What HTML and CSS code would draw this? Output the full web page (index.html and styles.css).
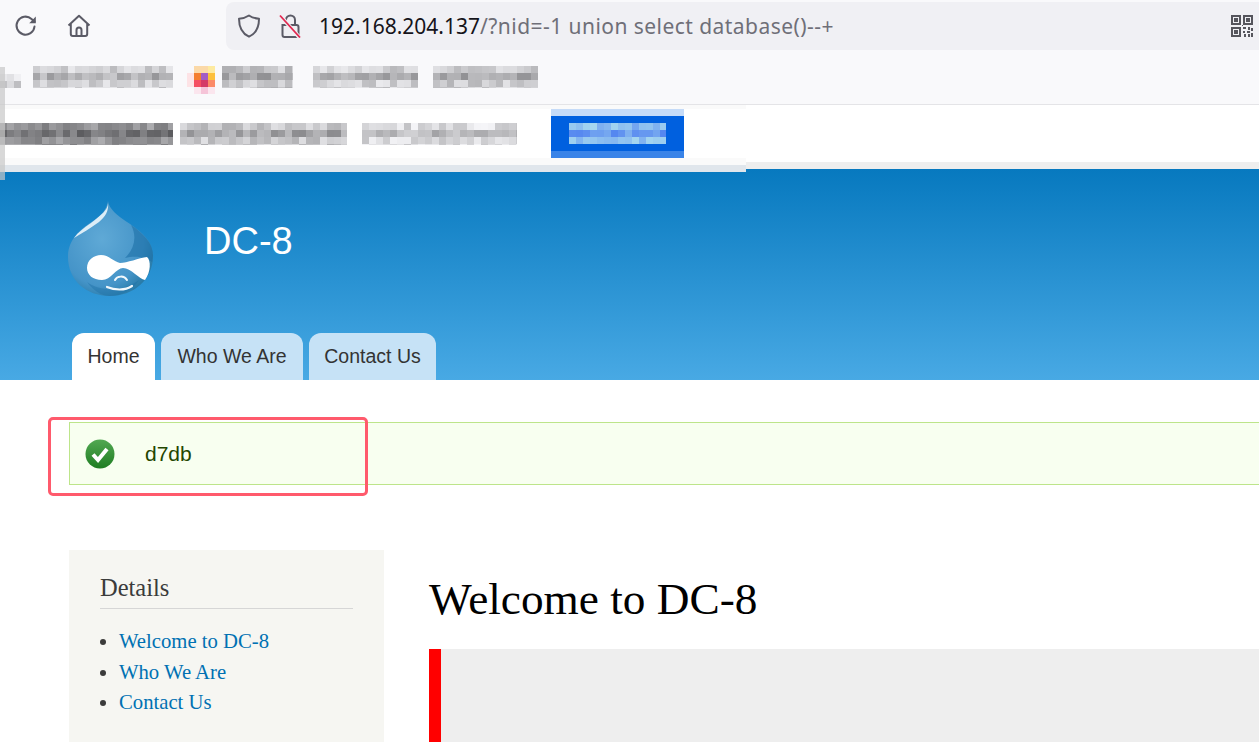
FILE: index.html
```html
<!DOCTYPE html>
<html lang="en">
<head>
    <meta charset="UTF-8">
    <meta name="viewport" content="width=device-width, initial-scale=1.0">
    <title>Welcome to DC-8</title>
    <link rel="stylesheet" href="styles.css">
</head>
<body>
    <div class="page">
        <div class="toolbar">
            <button class="nav-btn nav-reload" aria-label="Reload">
                <svg width="24" height="24" viewBox="0 0 24 24" fill="none" stroke="#5b5b66" stroke-width="2">
                    <path d="M20.5 12.5a9 9 0 1 1-3-7.6l3 2.6" stroke-linecap="round"/>
                    <path d="M21.8 2.6v6.6h-6.6z" fill="#5b5b66" stroke="none"/>
                </svg>
            </button>
            <button class="nav-btn nav-home" aria-label="Home">
                <svg width="24" height="24" viewBox="0 0 24 24" fill="none" stroke="#5b5b66" stroke-width="2" stroke-linejoin="round">
                    <path d="M1.5 11.5 12 1.8l10.5 9.7M3.8 10v10a2 2 0 0 0 2 2h12.4a2 2 0 0 0 2-2V10"/>
                    <path d="M9.5 22v-6a2.5 2.5 0 0 1 5 0v6"/>
                </svg>
            </button>
            <div class="urlbar">
                <svg class="url-shield" width="24" height="24" viewBox="0 0 24 24" fill="none" stroke="#5b5b66" stroke-width="2" stroke-linejoin="round">
                    <path d="M12 1.5c3 2 6 3 10 3.2 0 8-2.500 14.500-10 18-7.500-3.500-10-10-10-18 4-.2 7-1.200 10-3.200z"/>
                </svg>
                <svg class="url-lock" width="24" height="24" viewBox="0 0 24 24" fill="none">
                    <path d="M3.500 11h14a2 2 0 0 1 2 2v8a2 2 0 0 1-2 2h-12a2 2 0 0 1-2-2z" stroke="#5b5b66" stroke-width="2"/>
                    <path d="M7 10V6a4.500 4.500 0 0 1 9 0v4" stroke="#5b5b66" stroke-width="2"/>
                    <path d="M1.500 2 21 24" stroke="#f0f0f4" stroke-width="4"/>
                    <path d="M1 1.500 21 23.500" stroke="#e22850" stroke-width="1.800"/>
                </svg>
                <div class="url-text"><span class="url-host">192.168.204.137</span><span class="url-path">/?nid=-1 union select database()--+</span></div>
                <svg class="url-qr" width="22" height="22" viewBox="0 0 22 22" fill="#55555c">
                    <path d="M0 0h10v10H0zm2 2v6h6V2zm1 1h4v4H3zM12 0h10v10H12zm2 2v6h6V2zm1 1h4v4h-4zM0 12h10v10H0zm2 2v6h6v-6zm1 1h4v4H3z" fill-rule="evenodd"/>
                    <path d="M12 12h3v2h-3zm5 0h2v3h-2zm3 1h2v3h-2zm-8 3h2v2h-2zm4 0h3v2h-3zm-3 3h2v3h-2zm4 0h2v3h-2zm3-1h2v4h-2zm-9-8h1v1h-1z"/>
                </svg>
            </div>
        </div>

        <div class="bookmarks">
            <canvas class="mosaic bm-stub" width="21" height="14" data-shade="205"></canvas>
            <canvas class="mosaic bm-first" width="140" height="22" data-shade="175"></canvas>
            <svg class="bm-favicon" width="28" height="28" viewBox="0 0 28 28">
                <path fill="#fbd9a8" d="M7 0h14v7H7z"/>
                <path fill="#fdeaa0" d="M21 0h7v7h-7z"/>
                <path fill="#fde3e6" d="M0 7h7v14H0z"/>
                <path fill="#f47e2f" d="M7 7h7v7H7z"/>
                <path fill="#a35cc4" d="M14 7h7v7h-7z"/>
                <path fill="#fdc03c" d="M21 7h7v7h-7z"/>
                <path fill="#f54e62" d="M7 14h7v7H7z"/>
                <path fill="#d43a66" d="M14 14h7v7h-7z"/>
                <path fill="#fb8a68" d="M21 14h7v7h-7z"/>
                <path fill="#f5c4d8" d="M14 21h7v7h-7z"/>
                <path fill="#fbe6ee" d="M7 21h7v7H7zM21 21h7v7h-7z"/>
            </svg>
            <canvas class="mosaic bm-second" width="71" height="22" data-shade="165"></canvas>
            <canvas class="mosaic bm-third" width="105" height="22" data-shade="175"></canvas>
            <canvas class="mosaic bm-fourth" width="105" height="22" data-shade="170"></canvas>
        </div>

        <div class="notice">
            <div class="notice-main">
                <div class="notice-row">
                    <canvas class="mosaic" width="173" height="22" data-shade="115"></canvas>
                    <canvas class="mosaic" width="167" height="22" data-shade="165"></canvas>
                    <canvas class="mosaic notice-tail" width="155" height="22" data-shade="185"></canvas>
                    <div class="notice-btn">
                        <canvas class="mosaic" width="97" height="21" data-shade="165" data-tint="blue"></canvas>
                    </div>
                </div>
            </div>
        </div>
        <div class="edge-sliver"></div>

        <header class="site-header">
            <div class="branding">
                <svg class="logo" width="88" height="98" viewBox="0 0 88 98">
                    <defs>
                        <radialGradient id="dropFill" cx="0.4" cy="0.4" r="0.7">
                            <stop offset="0" stop-color="#5fa9d6"/>
                            <stop offset="0.7" stop-color="#4594c8"/>
                            <stop offset="1" stop-color="#20749f"/>
                        </radialGradient>
                    </defs>
                    <path d="M41 1C42 9 50 15 60 22 75 32 86 41 86 56 86 80 66 96 43 96 19 96 1 80 1 57 1 39 14 29 26 21 34 16 40 9 41 1z" fill="url(#dropFill)"/>
                    <path d="M64 25C76 33 86 43 86 56L85 62C80 58 70 55 58 58 68 48 70 36 64 25z" fill="#1c6fa6" opacity="0.6"/>
                    <path d="M20 82C34 92 56 92 72 80 66 90 54 96 43 96 34 96 26 90 20 82z" fill="#1c6fa6" opacity="0.4"/>
                    <path d="M41 3C41 10 34 15 24 23 17 28 11 32 7 38 15 33 24 28 32 22 38 17 42 11 41 3z" fill="#dcedf7"/>
                    <path d="M20 68C20 60 27 55 34 55 42 55 47 62 53 63 60 63 72 58 80 57 84 60 84 72 78 80 72 79 64 68 56 68 49 68 44 80 35 80 26 80 20 75 20 68z" fill="#fff"/>
                    <path d="M40 87C47 90 58 91 65 86" fill="none" stroke="#f2f8fc" stroke-width="2.200" stroke-linecap="round"/>
                    <path d="M48 80C50 76 57 75 60 80" fill="none" stroke="#f2f8fc" stroke-width="2" stroke-linecap="round"/>
                </svg>
                <div class="site-name">DC-8</div>
            </div>
            <nav class="tabs">
                <a class="tab tab-home tab-active" href="#">Home</a>
                <a class="tab tab-who" href="#">Who We Are</a>
                <a class="tab tab-contact" href="#">Contact Us</a>
            </nav>
        </header>

        <div class="message">
            <svg class="message-icon" width="30" height="30" viewBox="0 0 30 30">
                <defs>
                    <linearGradient id="okFill" x1="0" y1="0" x2="0" y2="1">
                        <stop offset="0" stop-color="#52a852"/>
                        <stop offset="1" stop-color="#1f7d22"/>
                    </linearGradient>
                </defs>
                <circle cx="15" cy="15" r="14.500" fill="url(#okFill)"/>
                <path d="M8 15.500l5 5.500 9-11" fill="none" stroke="#fff" stroke-width="4"/>
            </svg>
            <span class="message-text">d7db</span>
        </div>
        <div class="annotation"></div>

        <div class="content">
            <aside class="sidebar">
                <h2 class="sidebar-title">Details</h2>
                <ul class="sidebar-list">
                    <li><a href="#">Welcome to DC-8</a></li>
                    <li><a href="#">Who We Are</a></li>
                    <li><a href="#">Contact Us</a></li>
                </ul>
            </aside>
            <main class="main">
                <h1>Welcome to DC-8</h1>
                <div class="callout"></div>
            </main>
        </div>
    </div>
    <script src="mosaic.js"></script>
</body>
</html>
```

FILE: styles.css
```css
* {
    box-sizing: border-box;
}

body {
    margin: 0;
    padding: 0;
    background-color: #fff;
    font-family: "Liberation Sans", Arial, sans-serif;
}

.page {
    position: relative;
    height: 742px;
    overflow: hidden;
}

.mosaic {
    display: block;
    flex: none;
}

/* browser chrome */
.toolbar {
    display: flex;
    height: 50px;
    padding-top: 2px;
    background-color: #f9f9fb;
}

.nav-btn {
    display: flex;
    align-items: center;
    justify-content: center;
    width: 24px;
    height: 48px;
    padding: 0;
    border: none;
    background: none;
}

.nav-reload {
    margin-left: 14px;
}

.nav-home {
    margin-left: 29px;
}

.urlbar {
    display: flex;
    flex: 1;
    align-items: center;
    height: 48px;
    margin-left: 135px;
    padding: 0 6px 0 11px;
    border-radius: 8px 0 0 8px;
    background-color: #f0f0f4;
}

.url-lock {
    margin-left: 18px;
}

.url-text {
    flex: 1;
    margin-left: 16px;
    font-family: "Noto Sans", sans-serif;
    font-size: 21px;
    white-space: nowrap;
}

.url-host {
    color: #15141a;
}

.url-path {
    letter-spacing: 0.45px;
    color: #6f6f78;
}

.bookmarks {
    display: flex;
    align-items: flex-start;
    height: 55px;
    padding-top: 16px;
    border-bottom: 1px solid #e4e4e7;
    background-color: #f9f9fb;
}

.bm-stub {
    margin-top: 8px;
}

.bm-first {
    margin-left: 12px;
}

.bm-favicon {
    flex: none;
    margin-left: 14px;
}

.bm-second {
    margin-left: 7px;
}

.bm-third {
    margin-left: 20px;
}

.bm-fourth {
    margin-left: 15px;
}

/* blurred banner under the toolbar */
.notice {
    height: 64px;
    border-bottom: 7px solid #eeeeee;
}

.notice-main {
    position: relative;
    z-index: 1;
    width: 746px;
    height: 67px;
    padding-top: 4px;
    border-bottom: 7px solid #e0e6ec;
    background-color: #fafafa;
}

.notice-row {
    display: flex;
    align-items: center;
    gap: 7px;
    height: 49px;
    background-color: #fff;
}

.notice-tail {
    margin-left: 8px;
}

.notice-btn {
    display: flex;
    align-items: center;
    justify-content: center;
    width: 133px;
    height: 49px;
    margin-left: 27px;
    border-top: 7px solid #c5dbf8;
    border-bottom: 7px solid #3a84e8;
    background-color: #0060df;
}

.edge-sliver {
    position: absolute;
    top: 67px;
    left: 0;
    z-index: 2;
    width: 5px;
    height: 113px;
    background-color: #c8c8c8;
    opacity: 0.7;
}

/* drupal site */
.site-header {
    display: flex;
    flex-direction: column;
    height: 211px;
    padding-top: 31px;
    background: linear-gradient(to bottom, #0779bf 0%, #48a9e4 100%);
}

.branding {
    display: flex;
    align-items: flex-start;
    height: 133px;
    padding-left: 67px;
}

.site-name {
    margin: 19px 0 0 49px;
    font-size: 38px;
    line-height: 44px;
    color: #fff;
}

.tabs {
    display: flex;
    gap: 6px;
    padding-left: 72px;
}

.tab {
    display: block;
    height: 47px;
    border-radius: 12px 12px 0 0;
    background-color: #c6e2f6;
    font-size: 19.500px;
    line-height: 47px;
    text-align: center;
    color: #333;
    text-decoration: none;
}

.tab-home {
    width: 83px;
}

.tab-who {
    width: 142px;
}

.tab-contact {
    width: 127px;
}

.tab-active {
    background-color: #fff;
}

.message {
    display: flex;
    align-items: center;
    height: 63px;
    margin: 42px -20px 0 69px;
    padding-left: 15px;
    border: 1px solid #bde58a;
    background-color: #f8fff0;
}

.message-text {
    margin-left: 30px;
    font-size: 21px;
    color: #234600;
}

.annotation {
    position: absolute;
    top: 417px;
    left: 48px;
    width: 320px;
    height: 79px;
    border: 3px solid #ff5a6c;
    border-radius: 5px;
}

.content {
    display: flex;
    gap: 45px;
    margin: 65px 0 0 69px;
}

.sidebar {
    flex: none;
    width: 315px;
    height: 192px;
    padding: 24px 31px 0;
    background-color: #f6f6f2;
    font-family: "Liberation Serif", Georgia, serif;
}

.sidebar-title {
    margin: 0;
    padding-bottom: 7px;
    border-bottom: 1px solid #d6d6d6;
    font-size: 24.500px;
    line-height: 27px;
    font-weight: normal;
    color: #3b3b3b;
}

.sidebar-list {
    margin: 17px 0 0;
    padding: 0 0 0 19px;
    font-size: 20.700px;
    line-height: 30.500px;
    color: #3b3b3b;
}

.sidebar-list a {
    color: #0071b3;
    text-decoration: none;
}

.main {
    flex: 1;
}

.main h1 {
    margin: 24px 0 0;
    font-family: "Liberation Serif", Georgia, serif;
    font-size: 45.300px;
    line-height: 50px;
    font-weight: normal;
    color: #000;
}

.callout {
    height: 93px;
    margin-top: 25px;
    border-left: 12px solid #f00;
    background-color: #eee;
}
```

FILE: mosaic.js
```js
// pixelated placeholder blocks for the blurred parts of the screenshot
const CELL = 7;
let seed = 17;

function nextRandom() {
    seed = (seed * 137 + 29) % 1009;
    return seed / 1009;
}

document.querySelectorAll('canvas.mosaic').forEach(function (canvas) {
    const ctx = canvas.getContext('2d');
    const shade = Number(canvas.dataset.shade);
    const isBlue = canvas.dataset.tint === 'blue';

    for (let y = 0; y < canvas.height; y += CELL) {
        for (let x = 0; x < canvas.width; x += CELL) {
            const middle = y >= CELL && y < CELL * 2;
            const value = Math.round(shade + (middle ? 0 : 35) + nextRandom() * 50 - 25);
            if (isBlue) {
                ctx.fillStyle = `rgb(${value - 60}, ${value - 10}, 240)`;
            } else {
                ctx.fillStyle = `rgb(${value}, ${value}, ${value + 3})`;
            }
            ctx.fillRect(x, y, CELL, CELL);
        }
    }
});
```
